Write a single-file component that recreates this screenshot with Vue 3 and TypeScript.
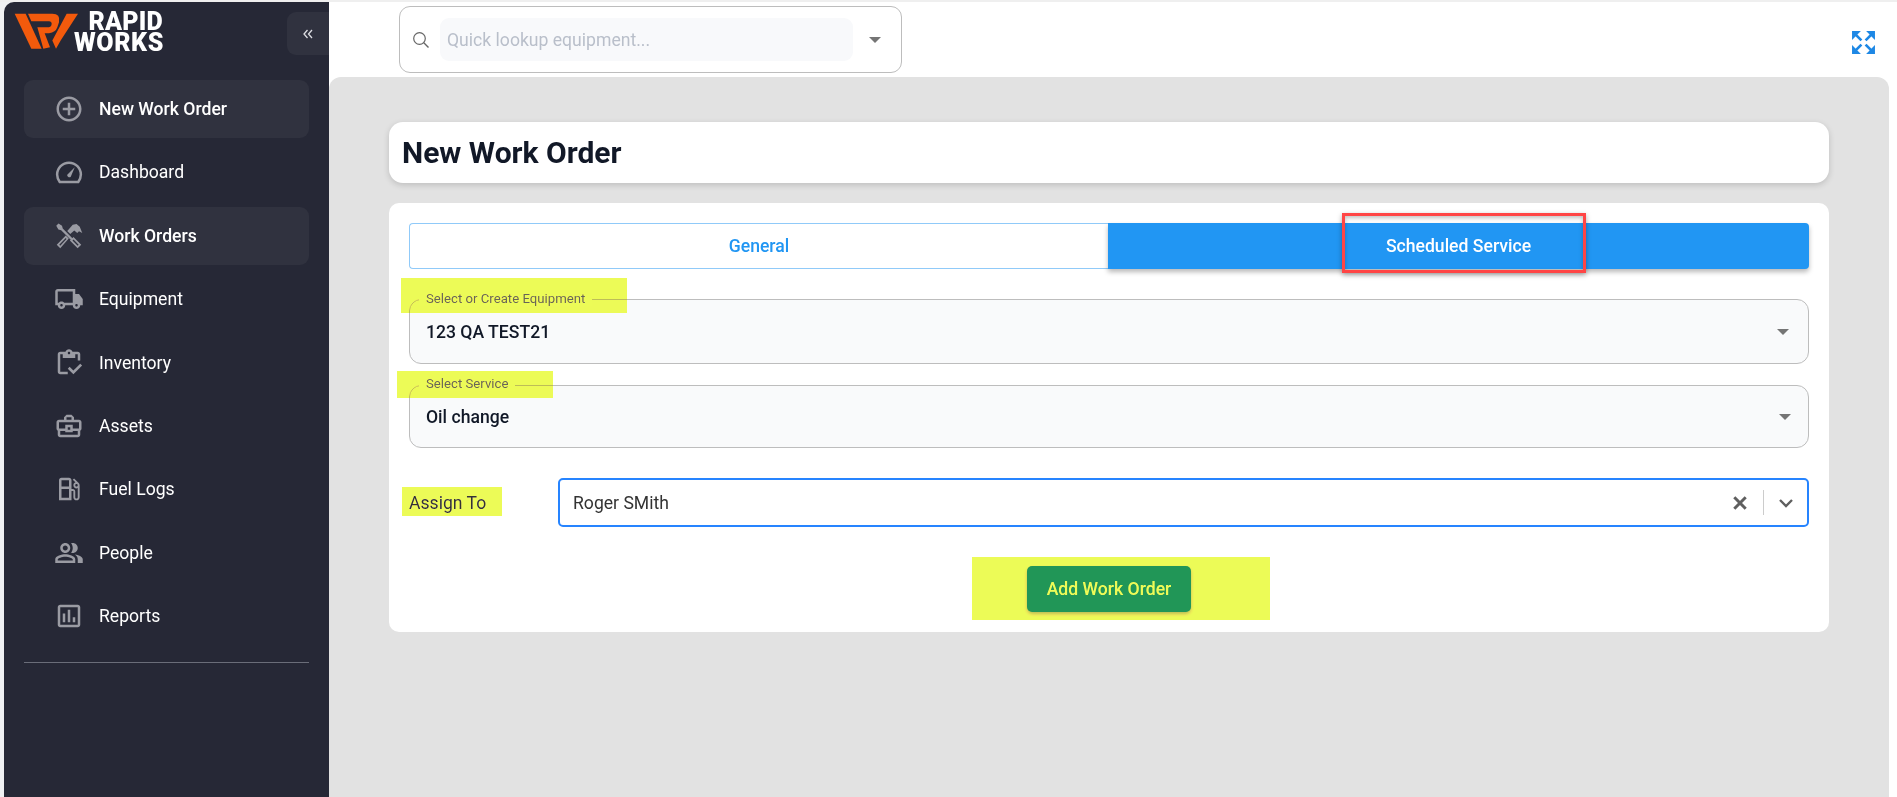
<script setup lang="ts">
interface NavItem {
  label: string
  active?: boolean
  paths: string[]
  strokes?: string[]
}

const nav: NavItem[] = [
  {
    label: 'New Work Order',
    active: true,
    paths: ['M13 7h-2v4H7v2h4v4h2v-4h4v-2h-4V7zm-1-5C6.48 2 2 6.48 2 12s4.48 10 10 10 10-4.48 10-10S17.52 2 12 2zm0 18c-4.41 0-8-3.59-8-8s3.59-8 8-8 8 3.59 8 8-3.59 8-8 8z']
  },
  {
    label: 'Dashboard',
    paths: ['M10.6 14.2 L16.6 8.2 L13.4 15.8 A1.7 1.7 0 0 1 10.6 14.2 Z'],
    strokes: ['M4.6 20 H19.4 C20.8 18 21.5 16 21.5 14 A9.5 9.5 0 0 0 2.5 14 C2.5 16 3.2 18 4.6 20 Z']
  },
  {
    label: 'Work Orders',
    active: true,
    paths: [
      'M3.6 2 L6.4 3.8 L7 6 L15.3 14.3 L14 15.6 L5.7 7.3 L3.5 6.7 L1.8 3.8 Z',
      'M15.6 12.7 L21.8 18.9 L18.9 21.8 L12.7 15.6 Z M15.6 14.8 L14.8 15.6 L18.9 19.7 L19.7 18.9 Z',
      'M10.6 8 L15 3 L18 2.4 L20.6 4.6 L22.6 9.6 L20 8.2 L18.6 9.6 L16.2 7.6 L13 10.4 Z',
      'M9.4 11.6 L11.8 14 L5 21.8 L2.2 19 Z M9.400 13.600 L4.200 19 L5 19.800 L10 14.300 Z'
    ]
  },
  {
    label: 'Equipment',
    paths: [
      'M20 8h-3V4H3c-1.1 0-2 .9-2 2v11h2c0 1.66 1.34 3 3 3s3-1.34 3-3h6c0 1.66 1.34 3 3 3s3-1.34 3-3h2v-5l-3-4zM6 18c-.55 0-1-.45-1-1s.45-1 1-1 1 .45 1 1-.45 1-1 1zm2.22-3c-.55-.61-1.33-1-2.22-1s-1.67.39-2.22 1H3V6h12v9H8.22zM18 18c-.55 0-1-.45-1-1s.45-1 1-1 1 .45 1 1-.45 1-1 1z'
    ]
  },
  {
    label: 'Inventory',
    paths: [
      'M5 5h2v3h10V5h2v5h2V5c0-1.1-.9-2-2-2h-4.18C14.4 1.84 13.3 1 12 1s-2.4.84-2.82 2H5c-1.1 0-2 .9-2 2v14c0 1.1.9 2 2 2h6v-2H5V5zm7-2c.55 0 1 .45 1 1s-.45 1-1 1-1-.45-1-1 .45-1 1-1z',
      'M21 12.5 15.51 18l-3.01-3L11 16.5l4.51 4.5 7-7z'
    ]
  },
  {
    label: 'Assets',
    paths: ['M20 7h-4V5l-2-2h-4L8 5v2H4c-1.1 0-2 .9-2 2v5c0 .75.4 1.38 1 1.73V19c0 1.11.89 2 2 2h14c1.11 0 2-.89 2-2v-3.28c.59-.35 1-.99 1-1.72V9c0-1.1-.9-2-2-2zM10 5h4v2h-4V5zM4 9h16v5h-5v-3H9v3H4V9zm9 6h-2v-2h2v2zm6 4H5v-3h4v1h6v-1h4v3z']
  },
  {
    label: 'Fuel Logs',
    paths: ['M19.77 7.23l.01-.01-3.72-3.72L15 4.56l2.11 2.11c-.94.36-1.61 1.26-1.61 2.33 0 1.38 1.12 2.5 2.5 2.5.36 0 .69-.08 1-.21v7.21c0 .55-.45 1-1 1s-1-.45-1-1V14c0-1.1-.9-2-2-2h-1V5c0-1.1-.9-2-2-2H6c-1.1 0-2 .9-2 2v16h10v-7.5h1.5v5c0 1.38 1.12 2.5 2.5 2.5s2.5-1.12 2.5-2.5V9c0-.69-.28-1.32-.73-1.77zM12 13.5V19H6v-7h6v1.5zm0-3.5H6V5h6v5zm6 0c-.55 0-1-.45-1-1s.45-1 1-1 1 .45 1 1-.45 1-1 1z']
  },
  {
    label: 'People',
    paths: [
      'M16.67 13.13C18.04 14.06 19 15.32 19 17v3h4v-3c0-2.18-3.57-3.47-6.33-3.87z',
      'M15 12c2.21 0 4-1.79 4-4s-1.79-4-4-4c-.47 0-.91.1-1.33.24C14.5 5.27 15 6.58 15 8s-.5 2.73-1.33 3.76c.42.14.86.24 1.33.24z',
      'M9 12c2.21 0 4-1.79 4-4s-1.79-4-4-4-4 1.79-4 4 1.79 4 4 4zm0-6c1.1 0 2 .9 2 2s-.9 2-2 2-2-.9-2-2 .9-2 2-2z',
      'M9 13c-2.67 0-8 1.34-8 4v3h16v-3c0-2.66-5.33-4-8-4zm6 5H3v-.99C3.2 16.29 6.3 15 9 15s5.8 1.29 6 2v1z'
    ]
  },
  {
    label: 'Reports',
    paths: ['M9 17H7v-7h2v7zm4 0h-2V7h2v10zm4 0h-2v-4h2v4zm2 2H5V5h14v14zm0-16H5c-1.1 0-2 .9-2 2v14c0 1.1.9 2 2 2h14c1.1 0 2-.9 2-2V5c0-1.1-.9-2-2-2z']
  }
]
</script>

<template>
  <div class="shell">
    <aside class="sidebar">
      <div class="brand-row">
        <div class="brand">
          <svg class="mark" viewBox="20 18 195 110" aria-hidden="true">
            <path d="M22 20H55L103 125H72Z" />
            <path d="M62 20H135Q160 20 155 45L150 60Q145 75 125 78H112L128 120L108 125L90 60H125Q132 60 133 50Q133 42 125 42H72Z" />
            <path d="M178 20H212L160 100L146 125L135 100Z" />
          </svg>
          <div class="wordmark">
            <span class="rapid">RAPID</span>
            <span class="works">WORKS</span>
          </div>
        </div>
        <button class="collapse" type="button" aria-label="Collapse">
          <svg viewBox="0 0 12 12" width="12" height="12">
            <path d="M5.5 2 2 6l3.5 4M10 2 6.500 6l3.500 4" fill="none" stroke="#dcdde2" stroke-width="1.300" />
          </svg>
        </button>
      </div>
      <nav class="nav">
        <a v-for="item in nav" :key="item.label" class="nav-item" :class="{ active: item.active }">
          <svg class="nav-icon" viewBox="0 0 24 24" aria-hidden="true">
            <path v-for="d in item.paths" :key="d" :d="d" />
            <path v-for="d in item.strokes || []" :key="d" :d="d" class="outline" />
          </svg>
          <span>{{ item.label }}</span>
        </a>
      </nav>
      <div class="divider"></div>
    </aside>

    <div class="right">
      <header class="topbar">
        <div class="lookup">
          <svg class="search" viewBox="0 0 18 18" width="18" height="18" aria-hidden="true">
            <circle cx="7.500" cy="7.500" r="5.800" fill="none" stroke="#666" stroke-width="1.200" />
            <path d="M11.800 11.800 16.500 16.500" stroke="#666" stroke-width="1.400" />
          </svg>
          <div class="lookup-input">Quick lookup equipment...</div>
          <span class="caret lookup-caret"></span>
        </div>
        <svg class="expand" viewBox="0 0 24 24" width="25" height="25" aria-hidden="true">
          <path d="M1 1H9.500L1 9.500ZM23 1V9.500L14.500 1ZM1 23V14.500L9.500 23ZM23 23H14.500L23 14.500Z" fill="#1e88e5" />
          <path d="M4 4 10 10M20 4 14 10M4 20 10 14M20 20 14 14" stroke="#1e88e5" stroke-width="2.600" />
        </svg>
      </header>

      <main class="main">
        <div class="title-card">
          <h1>New Work Order</h1>
        </div>
        <section class="form-card">
          <div class="tabs">
            <button class="tab" type="button">General</button>
            <button class="tab selected" type="button">Scheduled Service</button>
          </div>

          <div class="field first">
            <span class="legend">Select or Create Equipment</span>
            <span class="value">123 QA TEST21</span>
            <span class="caret"></span>
          </div>
          <div class="field second">
            <span class="legend">Select Service</span>
            <span class="value">Oil change</span>
            <span class="caret caret-far"></span>
          </div>

          <div class="assign">
            <label>Assign To</label>
            <div class="combo">
              <span class="combo-value">Roger SMith</span>
              <svg class="clear" viewBox="0 0 14 14" width="16" height="16" aria-hidden="true">
                <path d="M2 2 12 12M12 2 2 12" stroke="#5f5f5f" stroke-width="2.600" />
              </svg>
              <span class="combo-sep"></span>
              <svg class="chev" viewBox="0 0 16 10" width="16" height="10" aria-hidden="true">
                <path d="M2 2 8 8 14 2" fill="none" stroke="#5f5f5f" stroke-width="2.400" />
              </svg>
            </div>
          </div>

          <div class="actions">
            <button class="submit" type="button">Add Work Order</button>
          </div>
        </section>
      </main>
    </div>

    <div class="mark-red"></div>
    <div class="hl hl-a"></div>
    <div class="hl hl-b"></div>
    <div class="hl hl-c"></div>
    <div class="hl hl-d"></div>
  </div>
</template>

<style>
html,
body {
  margin: 0;
  background: #fff;
}
</style>

<style scoped>
* {
  box-sizing: border-box;
}

.shell {
  position: relative;
  display: flex;
  width: 1897px;
  height: 797px;
  overflow: hidden;
  border-top: 2px solid #efefef;
  background: #f0f1f3;
  font-family: Roboto, "Liberation Sans", sans-serif;
}

.sidebar {
  flex: 0 0 325px;
  margin-left: 4px;
  padding-top: 10px;
  border-top-left-radius: 10px;
  background: #262836;
}

.brand-row {
  display: flex;
  align-items: center;
  justify-content: space-between;
  height: 43px;
  margin-bottom: 25px;
}

.brand {
  display: flex;
  align-items: center;
  margin: 0 0 4px 10px;
}

.mark {
  width: 65px;
  height: 37px;
  fill: #f35a0c;
}

.wordmark {
  display: flex;
  flex-direction: column;
  align-items: flex-end;
  margin-left: -5px;
  color: #fff;
  font-weight: 900;
  font-size: 25px;
  line-height: 21px;
}

.rapid {
  letter-spacing: 0.200px;
}

.works {
  letter-spacing: 0.600px;
  margin-right: -1px;
}

.collapse {
  display: flex;
  align-items: center;
  justify-content: center;
  width: 42px;
  height: 43px;
  padding: 0;
  border: 0;
  border-radius: 9px 0 0 9px;
  background: #30323f;
}

.nav {
  display: grid;
  gap: 5.400px;
  padding: 0 20px;
}

.nav-item {
  display: flex;
  align-items: center;
  gap: 15px;
  height: 58px;
  padding-left: 30px;
  border-radius: 9px;
  color: #fff;
  font-size: 17.600px;
}

.nav-item.active {
  background: #30323f;
  font-weight: 500;
}

.nav-icon {
  width: 30px;
  height: 30px;
  fill: #9a9ba3;
}

.nav-icon .outline {
  fill: none;
  stroke: #9a9ba3;
  stroke-width: 2;
}

.divider {
  height: 1px;
  margin: 17px 20px 0;
  background: #6a6d79;
}

.right {
  display: flex;
  flex: 1;
  flex-direction: column;
  min-width: 0;
  background: #fff;
}

.topbar {
  display: flex;
  align-items: flex-start;
  justify-content: space-between;
  height: 75px;
  padding: 4px 21px 0 70px;
}

.lookup {
  display: flex;
  align-items: center;
  width: 503px;
  height: 67px;
  padding: 0 16px 0 12px;
  border: 1px solid #bdbdbd;
  border-radius: 11px;
}

.search {
  flex: none;
}

.lookup-input {
  display: flex;
  flex: none;
  align-items: center;
  width: 413px;
  height: 43px;
  margin-left: 10px;
  padding-left: 7px;
  border-radius: 9px;
  background: #f8f9fb;
  color: #b9bfca;
  font-size: 17.600px;
}

.lookup-caret {
  margin-left: 16px;
}

.caret {
  flex: none;
  width: 0;
  height: 0;
  border-top: 6px solid #757575;
  border-right: 6px solid transparent;
  border-left: 6px solid transparent;
}

.expand {
  margin-top: 24px;
}

.main {
  flex: 1;
  margin-right: 8px;
  padding: 45px 60px 0;
  border-radius: 12px 12px 0 0;
  background: #e2e2e2;
}

.title-card {
  display: flex;
  align-items: center;
  height: 61px;
  padding-left: 13px;
  border-radius: 14px;
  background: #fff;
  box-shadow: 0 2px 6px rgba(0, 0, 0, 0.16);
}

h1 {
  margin: 0;
  color: #111827;
  font-size: 30px;
  font-weight: 700;
  line-height: 1;
}

.form-card {
  margin-top: 20px;
  padding: 20px 20px 20px;
  border-radius: 10px;
  background: #fff;
}

.tabs {
  display: grid;
  grid-template-columns: 699px 1fr;
  height: 46px;
}

.tab {
  padding: 0;
  border: 1px solid #90caf9;
  border-right: 0;
  border-radius: 4px 0 0 4px;
  background: #fff;
  color: #2196f3;
  font-family: inherit;
  font-size: 17.600px;
  font-weight: 500;
}

.tab.selected {
  border: 0;
  border-radius: 0 4px 4px 0;
  background: #2196f3;
  color: #fff;
  box-shadow: 0 3px 5px rgba(0, 0, 0, 0.28);
}

.field {
  position: relative;
  display: flex;
  align-items: center;
  justify-content: space-between;
  padding: 0 19px 0 16px;
  border: 1px solid #bdbdbd;
  border-radius: 12px;
  background: #f9fafb;
}

.field.first {
  height: 65px;
  margin-top: 30px;
}

.field.second {
  height: 63px;
  margin-top: 21px;
}

.legend {
  position: absolute;
  top: -9px;
  left: 9px;
  padding: 0 7px;
  background: #fff;
  color: #666;
  font-size: 13.200px;
  line-height: 15px;
}

.second .legend {
  top: -10px;
}

.value {
  color: #111827;
  font-size: 17.600px;
  font-weight: 500;
}

.caret-far {
  margin-right: -2px;
}

.assign {
  display: flex;
  align-items: center;
  height: 49px;
  margin-top: 30px;
}

.assign label {
  flex: 0 0 149px;
  color: #333;
  font-size: 17.600px;
}

.combo {
  display: flex;
  flex: 1;
  align-items: center;
  height: 49px;
  padding: 0 13px;
  border: 2px solid #2684ff;
  border-radius: 5px;
  background: #fff;
}

.combo-value {
  flex: 1;
  color: #333;
  font-size: 17.600px;
}

.combo-sep {
  width: 1px;
  height: 25px;
  margin: 0 14px 0 15px;
  background: #ccc;
}

.actions {
  display: flex;
  justify-content: center;
  margin-top: 39px;
}

.submit {
  width: 164px;
  height: 46px;
  padding: 0;
  border: 0;
  border-radius: 5px;
  background: #21965a;
  color: #fff;
  font-family: inherit;
  font-size: 17.600px;
  font-weight: 500;
  box-shadow: 0 2px 4px rgba(0, 0, 0, 0.3);
}

.mark-red {
  position: absolute;
  top: 211px;
  left: 1342px;
  width: 244px;
  height: 60px;
  border: 3px solid #ff4545;
  box-shadow: 0 2px 5px rgba(0, 0, 0, 0.35), inset 0 2px 4px rgba(0, 0, 0, 0.25);
}

.hl {
  position: absolute;
  background: #ecfb57;
  mix-blend-mode: darken;
}

.hl-a {
  top: 276px;
  left: 401px;
  width: 226px;
  height: 35px;
}

.hl-b {
  top: 369px;
  left: 397px;
  width: 156px;
  height: 27px;
}

.hl-c {
  top: 485px;
  left: 402px;
  width: 100px;
  height: 29px;
}

.hl-d {
  top: 555px;
  left: 972px;
  width: 298px;
  height: 63px;
}
</style>
